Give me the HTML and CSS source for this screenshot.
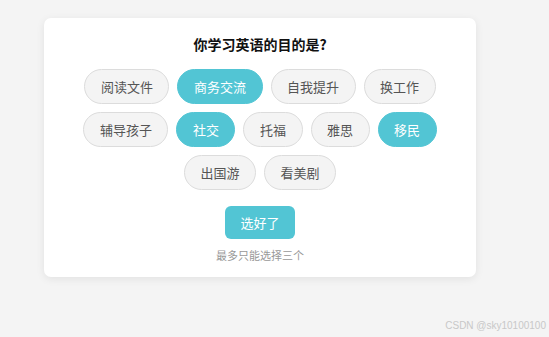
FILE: index.html
```html
<!DOCTYPE html>
<html>

<head>
  <title>学习目的</title>
  <link rel="stylesheet" href="styles.css">
</head>

<body>
  <div class="card">
    <h3 class="card-title">你学习英语的目的是?</h3>
    <div class="tags">
      <span class="tag">阅读文件</span>
      <span class="tag active">商务交流</span>
      <span class="tag">自我提升</span>
      <span class="tag">换工作</span>
      <span class="tag">辅导孩子</span>
      <span class="tag active">社交</span>
      <span class="tag">托福</span>
      <span class="tag">雅思</span>
      <span class="tag active">移民</span>
      <span class="tag">出国游</span>
      <span class="tag">看美剧</span>
    </div>
    <button class="submit">选好了</button>
    <p class="hint">最多只能选择三个</p>
  </div>
  <div class="watermark">CSDN @sky10100100</div>
</body>

</html>
```

FILE: styles.css
```css
body {
  margin: 0;
  min-height: 100vh;
  background-color: #f4f4f4;
  font-family: "Noto Sans CJK SC", "Noto Sans", sans-serif;
  position: relative;
}

.card {
  width: 432px;
  margin: 18px 0 0 44px;
  padding: 16px 0 14px;
  box-sizing: border-box;
  background-color: #ffffff;
  border-radius: 7px;
  box-shadow: 0 2px 8px rgba(0, 0, 0, 0.08);
  display: flex;
  flex-direction: column;
  align-items: center;
}

.card-title {
  margin: 0 0 15px;
  font-size: 14px;
  line-height: 20px;
  font-weight: bold;
  color: #111;
}

.tags {
  width: 380px;
  display: flex;
  flex-wrap: wrap;
  justify-content: center;
  gap: 8px;
}

.tag {
  padding: 0 15.5px;
  height: 33px;
  line-height: 33px;
  font-size: 13px;
  color: #555;
  background-color: #f4f4f4;
  border: 1px solid #dcdcdc;
  border-radius: 18px;
}

.tag.active {
  color: #ffffff;
  background-color: #52c5d4;
  border-color: #52c5d4;
}

.submit {
  margin-top: 16px;
  height: 33px;
  padding: 0 15px;
  font-family: inherit;
  font-size: 13px;
  color: #ffffff;
  background-color: #52c5d4;
  border: none;
  border-radius: 6px;
}

.hint {
  margin: 8px 0 0;
  font-size: 11px;
  line-height: 16px;
  color: #999;
}

.watermark {
  position: absolute;
  right: 3px;
  bottom: 6px;
  font-family: "Liberation Sans", sans-serif;
  font-size: 10px;
  color: #c8c8c8;
}
```
